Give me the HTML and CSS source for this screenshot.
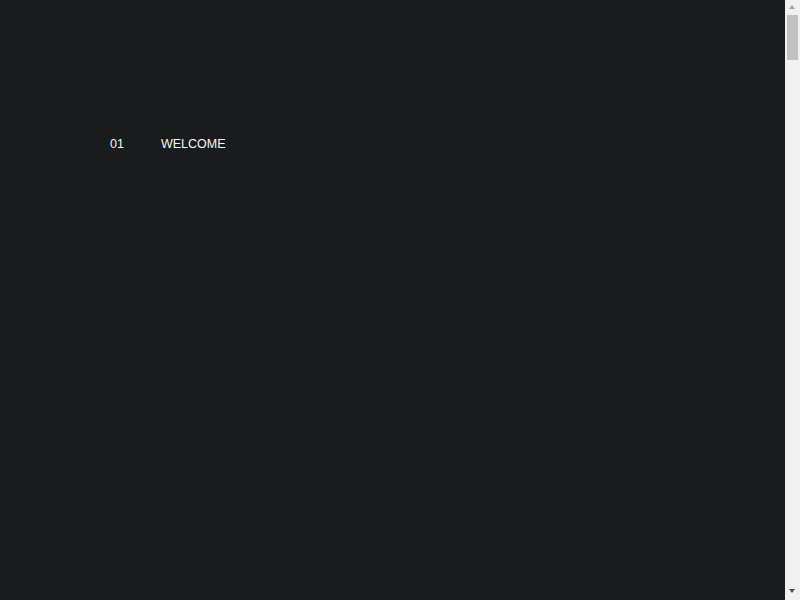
FILE: index.html
```html
<!DOCTYPE html>
<html>
<head>
<meta charset="utf-8">
<link rel="stylesheet" href="styles.css">
</head>
<body>
<main class="page">
  <section class="hero">
    <div class="label">
      <span class="num">01</span>
      <span class="title">WELCOME</span>
    </div>
  </section>
</main>
<div class="scrollbar" aria-hidden="true">
  <span class="arrow up"></span>
  <span class="thumb"></span>
  <span class="arrow down"></span>
</div>
</body>
</html>
```
FILE: styles.css
```css
html, body {
  margin: 0;
  padding: 0;
  background: #1a1b1d;
}
.page {
  min-height: 7600px;
  margin-right: 15px;
  font-family: "Liberation Sans", Arial, sans-serif;
  color: #f7f7f7;
}
.hero {
  padding: 134px 0 0 110px;
}
.label {
  display: flex;
  gap: 37px;
  font-size: 12.5px;
  line-height: 20px;
}
.scrollbar {
  position: fixed;
  top: 0;
  right: 0;
  width: 15px;
  height: 100vh;
  background: #f1f1f1;
}
.arrow {
  position: absolute;
  left: 4px;
  width: 0;
  height: 0;
  border-left: 3.5px solid transparent;
  border-right: 3.5px solid transparent;
}
.arrow.up {
  top: 5px;
  border-bottom: 4px solid #a3a3a3;
}
.arrow.down {
  bottom: 7px;
  border-top: 4px solid #505050;
}
.thumb {
  position: absolute;
  left: 2px;
  top: 15px;
  width: 11px;
  height: 45px;
  background: #c1c1c1;
}
```
